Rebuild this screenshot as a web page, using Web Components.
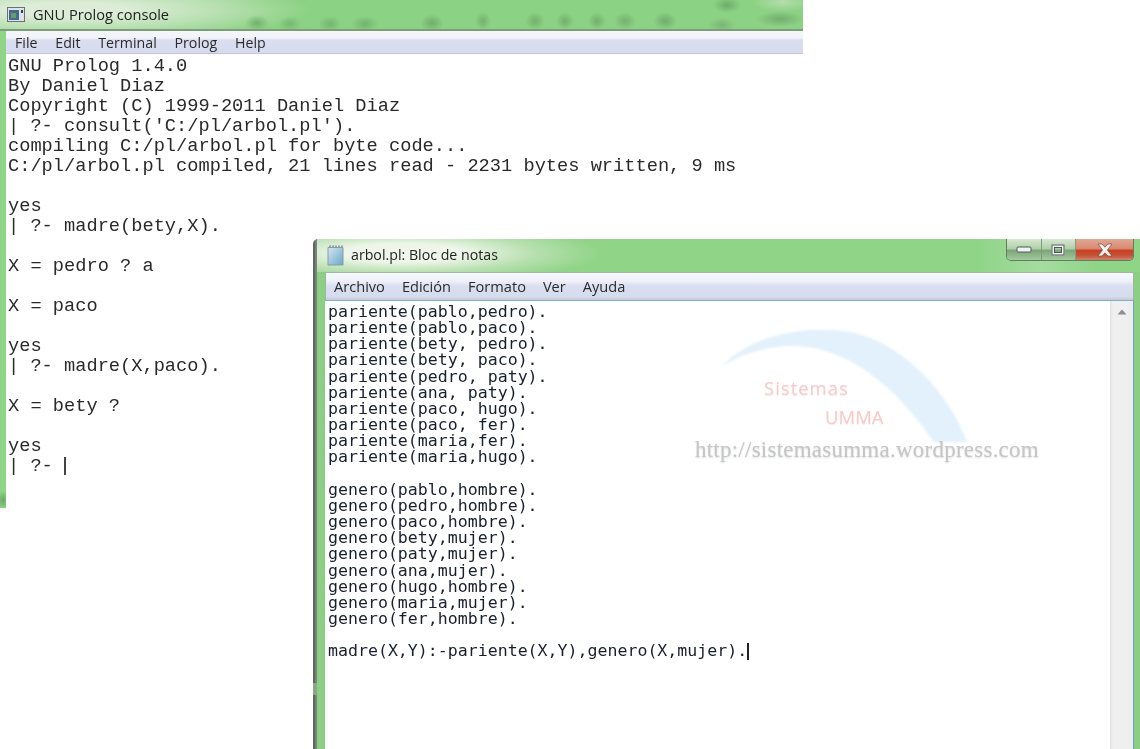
<!DOCTYPE html>
<html lang="es"><head><meta charset="utf-8"><title>GNU Prolog</title>
<style>
html,body{margin:0;padding:0;background:#fff;width:1140px;height:749px;overflow:hidden}
body{position:relative;font-family:"Open Sans","Noto Sans",sans-serif}
</style></head><body>
<console-window style="--win-left:0px;--win-top:0px;--win-width:803px;--win-height:508px"><menu-bar slot="menu" items="File,Edit,Terminal,Prolog,Help" style="--pad:9px;--gap:17.8px;--size:14.2px;--drop:2px"></menu-bar><text-line>GNU Prolog 1.4.0</text-line><text-line>By Daniel Diaz</text-line><text-line>Copyright (C) 1999-2011 Daniel Diaz</text-line><text-line>| ?- consult('C:/pl/arbol.pl').</text-line><text-line>compiling C:/pl/arbol.pl for byte code...</text-line><text-line>C:/pl/arbol.pl compiled, 21 lines read - 2231 bytes written, 9 ms</text-line><text-line></text-line><text-line>yes</text-line><text-line>| ?- madre(bety,X).</text-line><text-line></text-line><text-line>X = pedro ? a</text-line><text-line></text-line><text-line>X = paco</text-line><text-line></text-line><text-line>yes</text-line><text-line>| ?- madre(X,paco).</text-line><text-line></text-line><text-line>X = bety ?</text-line><text-line></text-line><text-line>yes</text-line><text-line>| ?- <text-caret style="--h:18px;--c:#444;--w:2px"></text-caret></text-line></console-window>
<notepad-window><menu-bar slot="menu" items="Archivo,Edición,Formato,Ver,Ayuda" style="--pad:8px;--gap:17px;--size:14.6px"></menu-bar><text-line>pariente(pablo,pedro).</text-line><text-line>pariente(pablo,paco).</text-line><text-line>pariente(bety, pedro).</text-line><text-line>pariente(bety, paco).</text-line><text-line>pariente(pedro, paty).</text-line><text-line>pariente(ana, paty).</text-line><text-line>pariente(paco, hugo).</text-line><text-line>pariente(paco, fer).</text-line><text-line>pariente(maria,fer).</text-line><text-line>pariente(maria,hugo).</text-line><text-line></text-line><text-line>genero(pablo,hombre).</text-line><text-line>genero(pedro,hombre).</text-line><text-line>genero(paco,hombre).</text-line><text-line>genero(bety,mujer).</text-line><text-line>genero(paty,mujer).</text-line><text-line>genero(ana,mujer).</text-line><text-line>genero(hugo,hombre).</text-line><text-line>genero(maria,mujer).</text-line><text-line>genero(fer,hombre).</text-line><text-line></text-line><text-line>madre(X,Y):-pariente(X,Y),genero(X,mujer).<text-caret style="--h:17px;--c:#222;--w:1.5px"></text-caret></text-line></notepad-window>
<blog-watermark></blog-watermark>
<script>
function define(name, html, extra){
  customElements.define(name, class extends HTMLElement{
    constructor(){super();const r=this.attachShadow({mode:'open'});r.innerHTML=html;}
    connectedCallback(){ if(extra) extra(this); }
  });
}
define('text-line',`<style>:host{display:block;width:max-content;min-height:1lh;white-space:pre}</style><slot></slot>`);
define('text-caret',`<style>:host{display:inline-block;width:var(--w,2px);height:var(--h,18px);background:var(--c,#333);vertical-align:-4px}</style>`);
define('menu-bar',`<style>
:host{display:flex;box-sizing:border-box;gap:var(--gap,16px);padding-left:var(--pad,9px);padding-top:var(--drop,0);align-items:center;height:100%;font:var(--size,14px)/1 "Open Sans","Noto Sans",sans-serif;color:#2b2b2b;filter:blur(.35px)}
</style><slot></slot>`,el=>{
  if(el.dataset.done)return; el.dataset.done=1;
  el.getAttribute('items').split(',').forEach(t=>{const s=document.createElement('span');s.textContent=t;s.style.display='block';el.appendChild(s);});
});
define('console-window',`<style>
:host{display:flex;flex-direction:column;position:absolute;left:var(--win-left);top:var(--win-top);width:var(--win-width);height:var(--win-height);box-sizing:border-box;padding-left:6px;
background:
 radial-gradient(ellipse 7px 9px at 3px 500px,#6aa866,transparent),
 linear-gradient(#8fd487,#8fd487);overflow:hidden}
.title{height:29px;margin-left:-6px;flex:none;display:flex;align-items:center;gap:8px;padding-left:7px;box-sizing:border-box;
background:
 radial-gradient(ellipse 12px 8px at 257px 23px,#6fb06b,transparent),
 radial-gradient(ellipse 12px 8px at 290px 24px,#76b873,transparent),
 radial-gradient(ellipse 12px 8px at 330px 24px,#74b570,transparent),
 radial-gradient(ellipse 14px 8px at 365px 24px,#72b26e,transparent),
 radial-gradient(ellipse 12px 9px at 432px 23px,#70ad6b,transparent),
 radial-gradient(ellipse 8px 9px at 483px 21px,#72b06d,transparent),
 radial-gradient(ellipse 10px 9px at 535px 21px,#72b06d,transparent),
 radial-gradient(ellipse 9px 9px at 565px 21px,#72b06d,transparent),
 radial-gradient(ellipse 9px 9px at 597px 21px,#72b06d,transparent),
 radial-gradient(ellipse 11px 9px at 625px 21px,#74b16f,transparent),
 radial-gradient(ellipse 12px 9px at 665px 21px,#70ad6b,transparent),
 radial-gradient(ellipse 14px 8px at 727px 5px,#6dab69,transparent),
 radial-gradient(ellipse 14px 8px at 722px 25px,#7ab676,transparent),
 radial-gradient(ellipse 24px 8px at 780px 19px,#74ad70,transparent),
 radial-gradient(ellipse 30px 10px at 783px 2px,#b5dcae,transparent),
 radial-gradient(ellipse 240px 30px at 70px 10px,#dcecd6 25%,#b5dfae 65%,transparent),
 #8cd284}
.icon{width:18px;height:15px;flex:none}
.name{font:14.6px/1 "Open Sans","Noto Sans",sans-serif;color:#222;filter:blur(.35px)}
.rule{height:2px;flex:none;margin-left:-6px;background:#7e9c78}
.menu{height:23px;flex:none;box-sizing:border-box;background:linear-gradient(#f5f6fb 0,#f2f4fa 7px,#d9dff0 9px,#d6dcee 22px,#c2c6d4 22px)}
.text{flex:1;background:#fff;font:18.68px/20px "Liberation Mono",monospace;color:#2a2a2a;padding:2px 0 0 2px;filter:blur(.4px);overflow:hidden}
</style>
<div class="title">
<svg class="icon" viewBox="0 0 18 15"><rect x=".5" y=".5" width="17" height="14" fill="#dfe3e8" stroke="#6b7078"/><rect x="2" y="3" width="10" height="10" fill="#3f6d8f"/><rect x="4" y="6" width="5" height="5" fill="#6f9a68"/><rect x="14" y="3" width="2" height="3" fill="#2f3f55"/></svg>
<span class="name">GNU Prolog console</span></div>
<div class="rule"></div>
<div class="menu"><slot name="menu"></slot></div>
<div class="text"><slot></slot></div>`);
define('notepad-window',`<style>
:host{display:flex;flex-direction:column;position:absolute;left:313px;top:239px;width:827px;height:510px;box-sizing:border-box;padding:0 6px 0 12px;
background:linear-gradient(#5f655f 444px,#88a884 444px,#88a884 456px,#5f655f 456px) 0 0/2px 100% no-repeat,linear-gradient(#7b817b 444px,#88a884 444px,#88a884 456px,#7b817b 456px) 2px 0/2px 100% no-repeat,#8ccf84;border-top-left-radius:5px;overflow:hidden}
.title{height:33px;flex:none;margin-left:-8px;margin-right:-6px;padding-left:10px;display:flex;align-items:flex-start;gap:7px;box-sizing:border-box;position:relative;
background:radial-gradient(ellipse 200px 30px at 86px 14px,#eef6ea 30%,#b8e0b0 65%,transparent),linear-gradient(90deg,#8fd487 80%,#a5dca0 88%,#8fd487 95%)}
.icon{width:17px;height:21px;flex:none;margin-top:6px}
.name{font:14.2px/1 "Open Sans","Noto Sans",sans-serif;color:#222;margin-top:9px;filter:blur(.35px)}
.menu{height:28px;flex:none;box-sizing:border-box;border:1px solid #9fb79c;border-bottom:0;background:linear-gradient(#f8f9fd 0,#eef1f9 8px,#d9dff0 13px,#d6dcee 24px,#c8ccd4 26px);border-radius:2px 2px 0 0}
.body{flex:1;display:flex;min-height:0;border-top:1px solid #7fb0d4;border-right:1px solid #6f9ec6;background:#fff}
.text{flex:1;font:16.58px/16.16px "DejaVu Sans Mono",monospace;color:#18202e;padding:3px 0 0 3px;filter:blur(.35px);overflow:hidden}
</style>
<div class="title">
<svg class="icon" viewBox="0 0 17 21"><defs><linearGradient id="g" x1="0" y1="0" x2="1" y2="1"><stop offset="0" stop-color="#d5e6f2"/><stop offset="1" stop-color="#6aa7c9"/></linearGradient></defs><path d="M1 2.5h15v17.5H1z" fill="url(#g)" stroke="#8a9aa6"/><path d="M3 2v-1.5M6 2v-1.5M9 2v-1.5M12 2v-1.5M15 2v-1.5" stroke="#555" stroke-width="1"/></svg>
<span class="name">arbol.pl: Bloc de notas</span>
<window-buttons></window-buttons></div>
<div class="menu"><slot name="menu"></slot></div>
<div class="body"><div class="text"><slot></slot></div><scroll-track></scroll-track></div>`);
define('window-buttons',`<style>
:host{position:absolute;left:689px;top:0;width:128px;height:22px;display:flex;border:1px solid #5f7f5f;border-top:0;border-radius:0 0 5px 5px;overflow:hidden;box-sizing:border-box}
div{display:flex;align-items:center;justify-content:center;box-sizing:border-box}
.min,.max{width:34.5px;background:linear-gradient(#d6e8d0,#b2d0ac 45%,#7ca677 55%,#a5c9a0);border-right:1px solid #7f9c7c}
.close{flex:1;background:linear-gradient(#e0a894,#d98a72 45%,#c9401f 55%,#c3563a 80%,#d0856f)}
</style>
<div class="min"><svg width="16" height="8" viewBox="0 0 16 8"><rect x="1" y="1" width="14" height="5" rx="1" fill="#f2f4f4" stroke="#4b5a55"/></svg></div>
<div class="max"><svg width="14" height="12" viewBox="0 0 14 12"><rect x="2" y="2" width="10" height="8" fill="none" stroke="#f2f4f4" stroke-width="3"/><rect x="1" y="1" width="12" height="10" fill="none" stroke="#4b5a55"/><rect x="3.5" y="3.5" width="7" height="5" fill="none" stroke="#4b5a55"/></svg></div>
<div class="close"><svg width="18" height="14" viewBox="0 0 18 14"><path d="M2 1h4l3 3.2L12 1h4l-4.6 6 4.6 6h-4L9 9.8 6 13H2l4.6-6z" fill="#f5f1ee" stroke="#7a4a3c" stroke-width=".7"/></svg></div>`);
define('scroll-track',`<style>
:host{display:flex;justify-content:center;width:23px;flex:none;box-sizing:border-box;background:linear-gradient(90deg,#e2e2e2,#f0f0f0 3px,#efefef);padding-top:8px}
svg{display:block;filter:blur(.4px)}
</style><svg width="10" height="6" viewBox="0 0 10 6"><path d="M5 0.5L9.5 5.5H.5z" fill="#8a8f94"/></svg>`);
define('blog-watermark',`<style>
:host{position:absolute;left:680px;top:320px;width:380px;height:160px;display:block}
svg{position:absolute;left:0;top:0;filter:blur(1px)}
.a,.b,.u{position:absolute;white-space:nowrap}
.a,.b{font:18.5px/1 "Open Sans","Noto Sans",sans-serif;color:#fbc9c7;letter-spacing:1px;text-shadow:0 1px 1px #eee;filter:blur(.3px)}
.a{left:84px;top:59px}.b{left:145px;top:88px;letter-spacing:0}
.u{left:15px;top:118px;font:23px/1 "Liberation Serif",serif;color:#c4c6c8;text-shadow:0 1px 2px #d8d8d8;letter-spacing:.24px;filter:blur(.4px)}
</style>
<svg width="380" height="160" viewBox="0 0 380 160"><path d="M42 46C70 16 125 3 175 13C225 25 270 75 287 122L254 122C220 72 170 24 108 26C85 27 62 34 42 46Z" fill="#e3f1fc"/></svg>
<span class="a">Sistemas</span><span class="b">UMMA</span><span class="u">http://sistemasumma.wordpress.com</span>`);
</script>
</body></html>
